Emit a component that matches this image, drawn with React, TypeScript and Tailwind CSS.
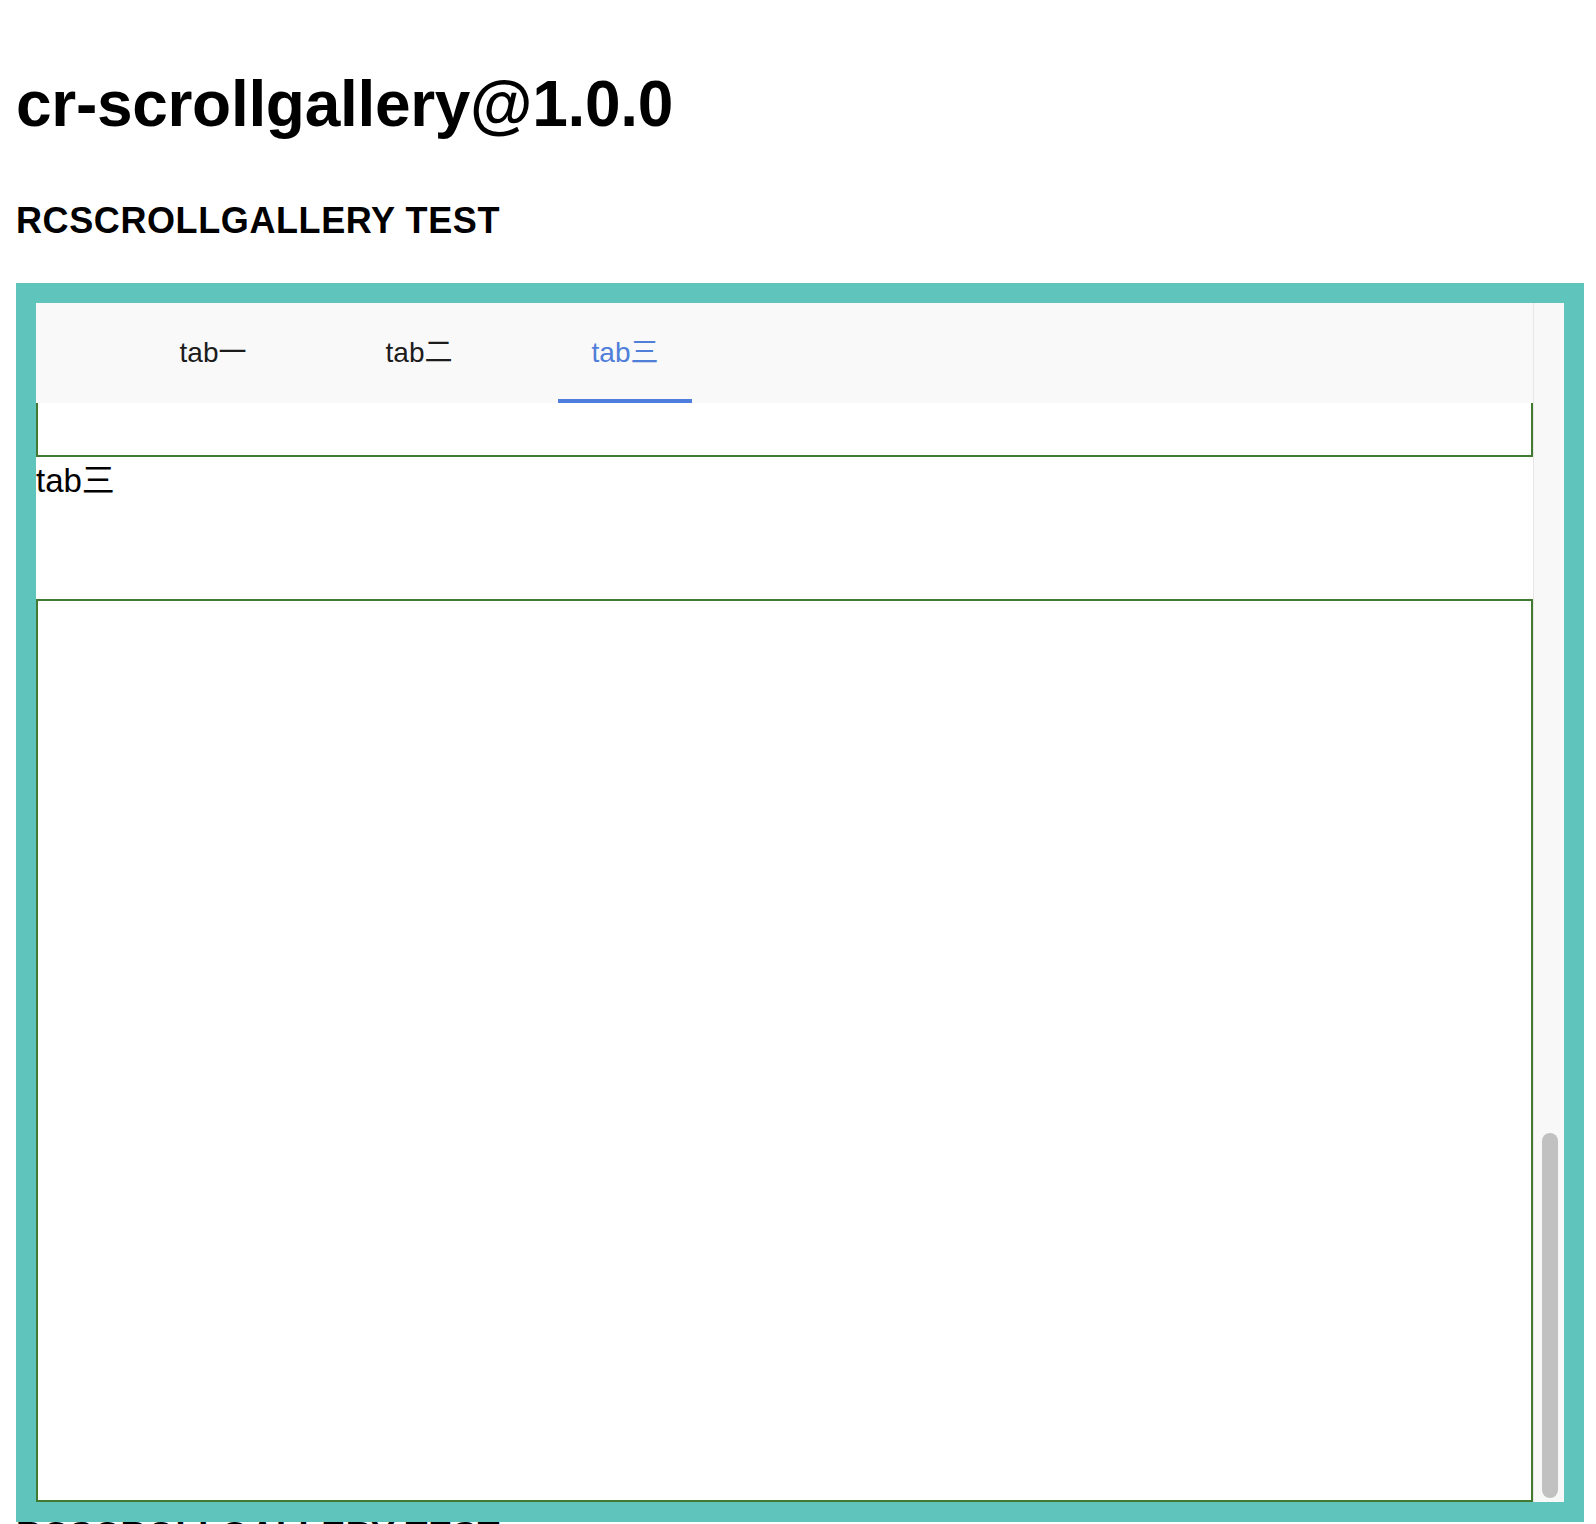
const tabs = ["tab一", "tab二", "tab三"];

const font = { fontFamily: '"Liberation Sans", "Noto Sans CJK SC", sans-serif' };

const App = () => {
  const active = 2;

  return (
    <div className="bg-white text-black pl-4 pt-[67px] min-h-[1524px] overflow-hidden" style={font}>
      <h1 className="text-[64px] font-bold leading-[normal] tracking-[-0.3px]">cr-scrollgallery@1.0.0</h1>
      <h2 className="mt-[59px] text-[36px] font-bold leading-[normal] tracking-[0.6px]">RCSCROLLGALLERY TEST</h2>

      <div className="mt-[41px] w-[1568px] h-[1239px] border-[20px] border-[#5fc5bc] flex">
        <div className="flex-1 flex flex-col overflow-hidden">
          <div className="h-[100px] shrink-0 bg-[#f9f9f9] flex pl-[110px] gap-[72px]">
            {tabs.map((t, i) => (
              <div
                key={t}
                className={`relative w-[134px] h-full flex items-center justify-center text-[28px] ${
                  i === active ? "text-[#4f7fd9]" : "text-[#1c1c1c]"
                }`}
              >
                {t}
                {i === active && (
                  <div className="absolute left-0 right-0 bottom-0 h-[4px] bg-[#4f7fdd]"></div>
                )}
              </div>
            ))}
          </div>

          <div className="h-[54px] shrink-0 border-x-2 border-b-2 border-[#417a30]"></div>

          <div className="h-[142px] shrink-0 text-[33px] leading-[48px]">tab三</div>

          <div className="h-[903px] shrink-0 border-2 border-[#417a30]"></div>
        </div>

        <div className="w-[31px] shrink-0 border-l border-[#e6e6e6] bg-[#f8f8f8] flex flex-col justify-end pb-[4px] pl-[8px]">
          <div className="h-[365px] w-[16px] rounded-full bg-[#c1c1c1]"></div>
        </div>
      </div>

      <h2 className="text-[36px] font-bold leading-[28px] tracking-[0.6px]">RCSCROLLGALLERY TEST</h2>
    </div>
  );
};

export default App;
